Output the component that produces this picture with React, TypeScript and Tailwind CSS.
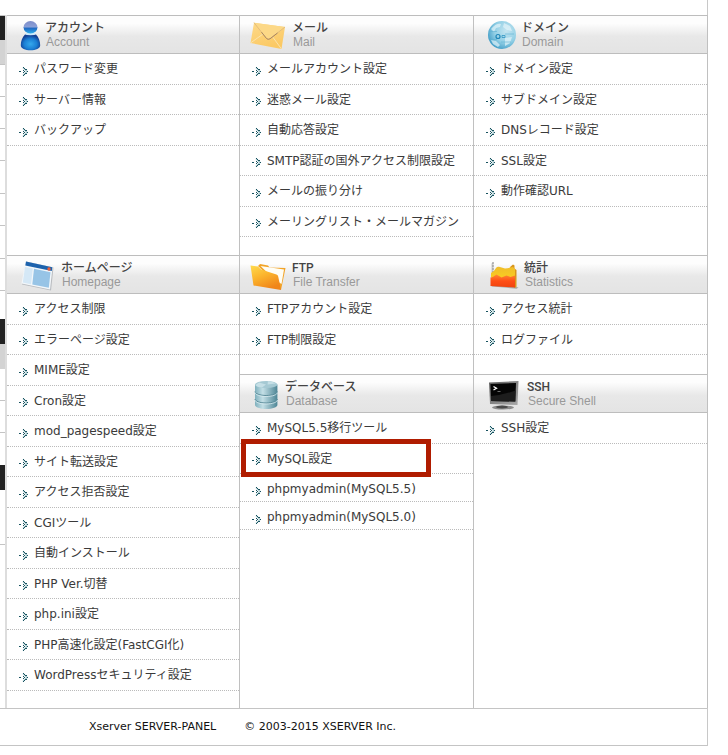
import type { ReactNode } from 'react'

// ── Icons ──────────────────────────────────────────────────────────────────────

function AccountIcon() {
  return (
    <svg width="24" height="36" viewBox="0 0 24 36" aria-hidden="true">
      <defs>
        <radialGradient id="acBody" cx="0.5" cy="0.6" r="0.55">
          <stop offset="0" stopColor="#35a8ec" />
          <stop offset="0.6" stopColor="#1b7fd4" />
          <stop offset="1" stopColor="#123f94" />
        </radialGradient>
        <linearGradient id="acHead" x1="0" y1="0" x2="0" y2="1">
          <stop offset="0" stopColor="#7d8dca" />
          <stop offset="0.45" stopColor="#8b9fd6" />
          <stop offset="0.6" stopColor="#1f6cc4" />
          <stop offset="1" stopColor="#2fb0ee" />
        </linearGradient>
      </defs>
      <path d="M8 17.500h11c2.800 2.500 4.200 7 4.200 10.800 0 3.400-4.500 5-9.700 5s-9.700-1.600-9.700-5c0-3.800 1.400-8.300 4.200-10.800z" fill="url(#acBody)" />
      <ellipse cx="13.500" cy="17" rx="5" ry="1.200" fill="#c9e9fb" />
      <ellipse cx="13.500" cy="10.300" rx="7" ry="6.200" fill="url(#acHead)" />
    </svg>
  )
}

function MailIcon() {
  return (
    <svg width="38" height="36" viewBox="0 0 38 36" aria-hidden="true">
      <defs>
        <linearGradient id="mlBody" x1="0" y1="0" x2="0.4" y2="1">
          <stop offset="0" stopColor="#fdd98a" />
          <stop offset="1" stopColor="#fbc964" />
        </linearGradient>
      </defs>
      <path d="M4 5.700 35 10 31.500 32 0.500 26z" fill="url(#mlBody)" />
      <path d="M0.500 26 13 17M31.500 32 22 19" stroke="#fbe3ab" strokeWidth="1" fill="none" />
      <path d="M4 5.700 16.500 21.500q1.500 1.500 3.500.300L35 10z" fill="#fcd887" />
      <path d="M4 5.700 16.500 21.500q1.500 1.500 3.500.300L35 10" fill="none" stroke="#e3bd7c" strokeWidth="1" />
      <path d="M11.500 15.200 16.500 21.500q1.500 1.500 3.500.300L27.500 16" fill="none" stroke="#a98661" strokeWidth="1" />
    </svg>
  )
}

function DomainIcon() {
  return (
    <svg width="33" height="36" viewBox="0 0 33 36" aria-hidden="true">
      <defs>
        <radialGradient id="dmGlobe" cx="0.65" cy="0.35" r="0.7">
          <stop offset="0" stopColor="#c4e5f1" />
          <stop offset="0.6" stopColor="#92cfe5" />
          <stop offset="1" stopColor="#459fc8" />
        </radialGradient>
      </defs>
      <circle cx="18" cy="18" r="14" fill="url(#dmGlobe)" />
      <path d="M7 12q5-6 10-5l-1 3-4 1-2 4zM20 6l6 3 2 5-5-1-4-3zM21 21l7-1-2 6-5 3zM7 23l5 1 4 4-2 2-5-3z" fill="#e2f3f9" opacity="0.7" />
      <path d="M5 14.500h8M21 17h9M6 22.500h7M17 25h10" fill="none" stroke="#5fb0d2" strokeWidth="1" opacity="0.6" />
      <circle cx="14" cy="19.500" r="2" fill="none" stroke="#1f86b8" strokeWidth="1.200" />
      <path d="M18 18.500h3v2h-3z" fill="none" stroke="#3c9cc6" strokeWidth="0.900" />
    </svg>
  )
}

function HomepageIcon() {
  return (
    <svg width="40" height="36" viewBox="0 0 40 36" aria-hidden="true">
      <path d="M9 4.500 36.500 10.500 34 33.500 5 27.500z" fill="#b9bcc0" />
      <path d="M8.500 4.500 35.500 10.500 33 32.500 4.500 26.500z" fill="#f3f7fa" />
      <path d="M9 4.500 35.300 10.300 34.800 14 8.300 8.500z" fill="#1e63ad" />
      <path d="M8 10 15.800 11.600 14 27.200 5.800 25.500z" fill="#d5e8f6" />
      <path d="M17 11.800 33.500 15.200 31.800 30.800 15.300 27.500z" fill="#97c4e6" />
      <circle cx="32" cy="12" r="1.700" fill="#f0603a" />
    </svg>
  )
}

function FtpIcon() {
  return (
    <svg width="38" height="36" viewBox="0 0 38 36" aria-hidden="true">
      <defs>
        <linearGradient id="ftFront" x1="0" y1="0" x2="0.5" y2="1">
          <stop offset="0" stopColor="#ffdb4d" />
          <stop offset="0.500" stopColor="#fbb32c" />
          <stop offset="1" stopColor="#f08519" />
        </linearGradient>
      </defs>
      <path d="M8 9 10 7l8 1.500 1.500 2L35.500 11l-4.500 22-6-8z" fill="#f2a428" />
      <path d="M10.500 9 34 12.500 31.500 27 24 22z" fill="#fffdf4" />
      <path d="M0.500 8.500 8 9.500l3 3 15.500 5q1.500.500 1.700 2L31 33 3.500 28.500z" fill="url(#ftFront)" />
    </svg>
  )
}

function StatisticsIcon() {
  return (
    <svg width="36" height="36" viewBox="0 0 36 36" aria-hidden="true">
      <defs>
        <linearGradient id="stYellow" x1="0" y1="0" x2="0" y2="1">
          <stop offset="0" stopColor="#f0bd2a" />
          <stop offset="1" stopColor="#ffd51c" />
        </linearGradient>
        <linearGradient id="stRed" x1="0" y1="0" x2="0" y2="1">
          <stop offset="0" stopColor="#ff8a35" />
          <stop offset="0.500" stopColor="#ff4f16" />
          <stop offset="1" stopColor="#f0440f" />
        </linearGradient>
      </defs>
      <path d="M6.500 28l26 2 2 0.500-2 1.200L8 29.500z" fill="#a8a8a8" />
      <path d="M7.500 6.500 9.500 5v14l-2 4z" fill="#c9c9c9" />
      <path d="M9 5v12" stroke="#8f8f8f" strokeWidth="1" strokeDasharray="2 1" />
      <path d="M26 10 29 7.500l1.500 1v3l2 1.500v17l-2 1z" fill="#d9951a" />
      <path d="M7 20V16q3-1 5-5 1-1.500 3-1.200l6 1.700q4-.500 8-1.500l2 2v16z" fill="url(#stYellow)" />
      <path d="M6.500 20.500q3-.500 6-3l5 3 5-2 4 1.500 4.500-1.500v12L6.500 29z" fill="url(#stRed)" />
    </svg>
  )
}

function DatabaseIcon() {
  return (
    <svg width="31" height="36" viewBox="0 0 31 36" aria-hidden="true">
      <defs>
        <linearGradient id="dbSide" x1="0" y1="0" x2="1" y2="0">
          <stop offset="0" stopColor="#7fb0bd" />
          <stop offset="0.350" stopColor="#c3dfe6" />
          <stop offset="1" stopColor="#4d8595" />
        </linearGradient>
      </defs>
      <path d="M5 8.500v20.500c0 2.200 5 4 11.200 4s11.200-1.800 11.200-4V8.500z" fill="url(#dbSide)" />
      <path d="M5 15.500c0 2.200 5 4 11.200 4s11.200-1.800 11.200-4M5 23c0 2.200 5 4 11.200 4s11.200-1.800 11.200-4" fill="none" stroke="#5b8c9a" strokeWidth="1" />
      <path d="M5 16.500c0 2.200 5 4 11.200 4s11.200-1.800 11.200-4M5 24c0 2.200 5 4 11.200 4s11.200-1.800 11.200-4" fill="none" stroke="#d8ebf0" strokeWidth="0.800" />
      <ellipse cx="16.200" cy="8.500" rx="11.200" ry="3.600" fill="#a5c9d3" />
      <path d="M9 6.500 16 8.500 12 11.500q-5-.500-6.500-2.500zM18 5.200q5 .3 8 2.300L17.500 8.500z" fill="#c5dfe6" />
    </svg>
  )
}

function SshIcon() {
  return (
    <svg width="39" height="36" viewBox="0 0 39 36" aria-hidden="true">
      <defs>
        <linearGradient id="shFrame" x1="0" y1="0" x2="1" y2="1">
          <stop offset="0" stopColor="#5f5f5f" />
          <stop offset="1" stopColor="#a9a9a9" />
        </linearGradient>
      </defs>
      <ellipse cx="19" cy="31.500" rx="11" ry="2" fill="#8b8b8b" />
      <ellipse cx="18" cy="31" rx="6" ry="1.400" fill="#4a4a4a" />
      <path d="M5 6.500 34.500 5 33.500 29 6 28z" fill="url(#shFrame)" />
      <path d="M6.500 8 32 7 31.300 25.500 7 25z" fill="#050505" />
      <path d="M7 20q12-1 24.500-5.500L31.300 25.500 7 25z" fill="#1d1d1d" />
      <path d="M9.500 10.500 12.500 12.300 9.500 14" fill="none" stroke="#fff" strokeWidth="1.300" />
      <path d="M13.500 15.500h3" stroke="#888" strokeWidth="0.800" />
    </svg>
  )
}

function Bullet() {
  return (
    <svg width="10" height="9" viewBox="0 0 10 9" className="mt-1 shrink-0" aria-hidden="true">
      <path d="M4 0.500 8 4.500 4 8.500" fill="none" stroke="#a9c8ce" strokeWidth="1.500" />
      <path
        d="M0 4h2v1H0zM4 0h1v1H4zM5 1h1v1H5zM6 2h2v1H6zM8 4h1v1H8zM6 6h2v1H6zM5 7h1v1H5zM4 8h1v1H4zM4 3h1v1H4zM5 4h1v1H5zM4 5h1v1H4z"
        fill="#17525f"
      />
    </svg>
  )
}

// ── Data ───────────────────────────────────────────────────────────────────────

interface Section {
  title: string
  subtitle: string
  icon: ReactNode
  items: string[]
  className: string
}

const HIGHLIGHTED = 'MySQL設定'

const SECTIONS: Section[] = [
  {
    title: 'アカウント',
    subtitle: 'Account',
    icon: <AccountIcon />,
    items: ['パスワード変更', 'サーバー情報', 'バックアップ'],
    className: 'pb-[18px]',
  },
  {
    title: 'メール',
    subtitle: 'Mail',
    icon: <MailIcon />,
    items: [
      'メールアカウント設定',
      '迷惑メール設定',
      '自動応答設定',
      'SMTP認証の国外アクセス制限設定',
      'メールの振り分け',
      'メーリングリスト・メールマガジン',
    ],
    className: 'pb-[18px]',
  },
  {
    title: 'ドメイン',
    subtitle: 'Domain',
    icon: <DomainIcon />,
    items: ['ドメイン設定', 'サブドメイン設定', 'DNSレコード設定', 'SSL設定', '動作確認URL'],
    className: 'pb-[18px]',
  },
  {
    title: 'ホームページ',
    subtitle: 'Homepage',
    icon: <HomepageIcon />,
    items: [
      'アクセス制限',
      'エラーページ設定',
      'MIME設定',
      'Cron設定',
      'mod_pagespeed設定',
      'サイト転送設定',
      'アクセス拒否設定',
      'CGIツール',
      '自動インストール',
      'PHP Ver.切替',
      'php.ini設定',
      'PHP高速化設定(FastCGI化)',
      'WordPressセキュリティ設定',
    ],
    className: 'row-span-2 pb-[17px]',
  },
  {
    title: 'FTP',
    subtitle: 'File Transfer',
    icon: <FtpIcon />,
    items: ['FTPアカウント設定', 'FTP制限設定'],
    className: 'pb-[19px]',
  },
  {
    title: '統計',
    subtitle: 'Statistics',
    icon: <StatisticsIcon />,
    items: ['アクセス統計', 'ログファイル'],
    className: 'pb-[19px]',
  },
  {
    title: 'データベース',
    subtitle: 'Database',
    icon: <DatabaseIcon />,
    items: ['MySQL5.5移行ツール', 'MySQL設定', 'phpmyadmin(MySQL5.5)', 'phpmyadmin(MySQL5.0)'],
    className: 'pb-[18px]',
  },
  {
    title: 'SSH',
    subtitle: 'Secure Shell',
    icon: <SshIcon />,
    items: ['SSH設定'],
    className: 'pb-[18px]',
  },
]

// Visible edge of the side menu, top to bottom
const SIDE_ROWS = [
  'h-6 bg-[#222222]',
  'h-6 bg-[#d3d3d3]',
  'h-8 border-t border-[#c4c4c4]',
  'h-8 border-t border-[#c4c4c4]',
  'h-8 border-t border-[#c4c4c4]',
  'h-[33px] border-t border-[#c4c4c4]',
  'h-8 border-t border-[#c4c4c4]',
  'h-[33px] border-t border-[#c4c4c4]',
  'h-8 border-t border-[#c4c4c4]',
  'h-[29px] border-t border-[#c4c4c4]',
  'h-[25px] bg-[#222222]',
  'h-[25px] bg-[#d3d3d3]',
  'h-8 border-b border-[#c4c4c4]',
  'h-8 border-b border-[#c4c4c4]',
  'h-8',
  'h-[25px] bg-[#222222]',
  'h-[55px] border-b border-[#c4c4c4]',
]

// ── Components ─────────────────────────────────────────────────────────────────

function MenuItem({ label }: { label: string }) {
  // Latin-only entries sit in slightly shorter rows
  const short = label.startsWith('phpmyadmin')

  return (
    <li
      className={[
        'relative flex items-center gap-[5px] border-b border-dotted border-[#bbbbbb] pl-3',
        short ? 'h-7 pt-[3px]' : 'odd:h-[31px] even:h-[30px]',
      ].join(' ')}
    >
      <Bullet />
      <a href="#" className="whitespace-nowrap hover:underline">
        {label}
      </a>
      {label === HIGHLIGHTED && (
        <span className="pointer-events-none absolute -top-[5px] left-px h-[38px] w-[190px] border-[5px] border-[#b01c00]" />
      )}
    </li>
  )
}

function Panel({ section }: { section: Section }) {
  return (
    <section className={`border-r border-[#c0c0c0] ${section.className}`}>
      <header className="flex h-[39px] items-center gap-1 border-y border-[#bdbdbd] bg-linear-to-b from-[#fdfdfd] from-20% via-[#e8e8e8] via-55% to-[#e4e4e4] pl-[10px]">
        {section.icon}
        <div>
          <h2 className="font-[Roboto,'Noto_Sans_CJK_JP',sans-serif] text-xs leading-[14px] font-medium text-[#444444]">
            {section.title}
          </h2>
          <p className="pl-px font-['Liberation_Sans',Arial,sans-serif] text-xs leading-[14px] text-[#999999]">
            {section.subtitle}
          </p>
        </div>
      </header>
      <ul>
        {section.items.map((label) => (
          <MenuItem key={label} label={label} />
        ))}
      </ul>
    </section>
  )
}

export default function App() {
  return (
    <div
      lang="ja"
      className="min-h-screen bg-white pr-5 font-['DejaVu_Sans',Verdana,'Noto_Sans_CJK_JP',sans-serif] text-xs text-[#3a3a3a]"
    >
      <div className="border-r border-[#c8c8c8] pt-[15px]">
        <div className="flex">
          <aside className="w-[5px] shrink-0 border-t border-[#c4c4c4]">
            {SIDE_ROWS.map((row, i) => (
              <div key={i} className={row} />
            ))}
          </aside>
          <main className="-mr-px grid flex-1 grid-cols-[233fr_234fr_234fr] grid-rows-[auto_auto_1fr] border-l-2 border-[#dddddd]">
            {SECTIONS.map((section) => (
              <Panel key={section.title} section={section} />
            ))}
          </main>
        </div>
        <footer className="flex h-[38px] items-center gap-7 border-y border-[#c4c4c4] pl-[89px] text-[11px] text-[#111111]">
          <span>Xserver SERVER-PANEL</span>
          <span>© 2003-2015 XSERVER Inc.</span>
        </footer>
      </div>
    </div>
  )
}
